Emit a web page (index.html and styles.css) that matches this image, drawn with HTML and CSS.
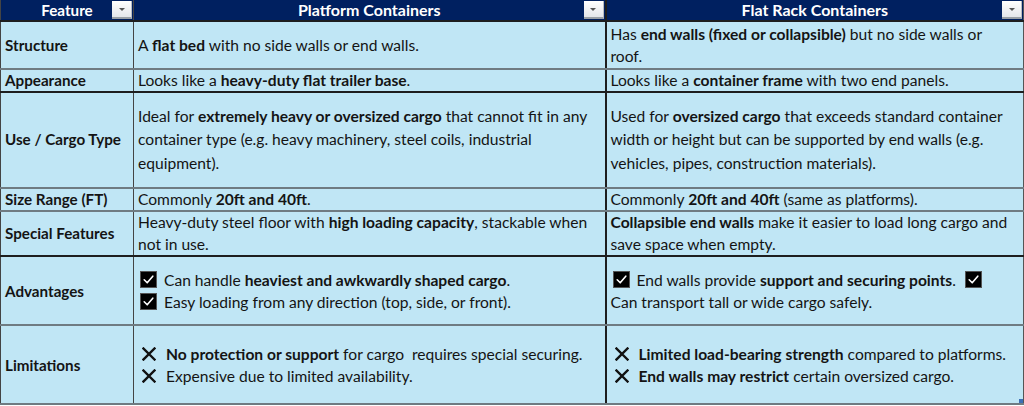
FILE: index.html
```html
<!DOCTYPE html>
<html lang="en">
<head>
<meta charset="utf-8">
<title>Platform vs Flat Rack Containers</title>
<link rel="stylesheet" href="styles.css">
</head>
<body>
<svg width="0" height="0" class="defs" aria-hidden="true">
  <defs>
    <symbol id="chk" viewBox="0 0 17 17">
      <rect x="0.5" y="0.5" width="16" height="16" fill="#000" stroke="#555" stroke-width="1"/>
      <path d="M4.2 8.8 L7.2 11.8 L12.8 5.2" fill="none" stroke="#fff" stroke-width="1.6" stroke-linecap="round" stroke-linejoin="round"/>
    </symbol>
    <symbol id="xx" viewBox="0 0 14 14">
      <path d="M1.5 1.5 L12.5 12.5 M12.5 1.5 L1.5 12.5" fill="none" stroke="#111" stroke-width="2.4" stroke-linecap="square"/>
    </symbol>
  </defs>
</svg>
<table class="grid">
  <colgroup>
    <col class="c1">
    <col class="c2">
    <col class="c3">
  </colgroup>
  <thead>
    <tr class="head">
      <th class="col-a">Feature<span class="filter"><i></i></span></th>
      <th class="col-b">Platform Containers<span class="filter"><i></i></span></th>
      <th class="col-c">Flat Rack Containers<span class="filter"><i></i></span></th>
    </tr>
  </thead>
  <tbody>
    <tr class="r-structure">
      <th class="col-a">Structure</th>
      <td class="col-b">A <b>flat bed</b> with no side walls or end walls.</td>
      <td class="col-c">Has <b>end walls (fixed or collapsible)</b> but no side walls or<br>roof.</td>
    </tr>
    <tr class="r-appearance dark">
      <th class="col-a">Appearance</th>
      <td class="col-b">Looks like a <b>heavy-duty flat trailer base</b>.</td>
      <td class="col-c">Looks like a <b>container frame</b> with two end panels.</td>
    </tr>
    <tr class="r-use">
      <th class="col-a">Use / Cargo Type</th>
      <td class="col-b">Ideal for <b>extremely heavy or oversized cargo</b> that cannot fit in any<br>container type (e.g. heavy machinery, steel coils, industrial<br>equipment).</td>
      <td class="col-c">Used for <b>oversized cargo</b> that exceeds standard container<br>width or height but can be supported by end walls (e.g.<br>vehicles, pipes, construction materials).</td>
    </tr>
    <tr class="r-size">
      <th class="col-a">Size Range (FT)</th>
      <td class="col-b">Commonly <b>20ft and 40ft</b>.</td>
      <td class="col-c">Commonly <b>20ft and 40ft</b> (same as platforms).</td>
    </tr>
    <tr class="r-special dark">
      <th class="col-a">Special Features</th>
      <td class="col-b">Heavy-duty steel floor with <b>high loading capacity</b>, stackable when<br>not in use.</td>
      <td class="col-c"><b>Collapsible end walls</b> make it easier to load long cargo and<br>save space when empty.</td>
    </tr>
    <tr class="r-adv">
      <th class="col-a">Advantages</th>
      <td class="col-b">
        <div class="item"><svg class="ico-chk"><use href="#chk"/></svg><span>Can handle <b>heaviest and awkwardly shaped cargo</b>.</span></div>
        <div class="item"><svg class="ico-chk"><use href="#chk"/></svg><span>Easy loading from any direction (top, side, or front).</span></div>
      </td>
      <td class="col-c">
        <div class="item"><svg class="ico-chk"><use href="#chk"/></svg><span>End walls provide <b>support and securing points</b>.</span><svg class="ico-chk tail"><use href="#chk"/></svg></div>
        <div class="item">Can transport tall or wide cargo safely.</div>
      </td>
    </tr>
    <tr class="r-lim">
      <th class="col-a">Limitations</th>
      <td class="col-b">
        <div class="item"><svg class="ico-x"><use href="#xx"/></svg><span><b>No protection or support</b> for cargo&nbsp; requires special securing.</span></div>
        <div class="item"><svg class="ico-x"><use href="#xx"/></svg><span>Expensive due to limited availability.</span></div>
      </td>
      <td class="col-c">
        <div class="item"><svg class="ico-x"><use href="#xx"/></svg><span><b>Limited load-bearing strength</b> compared to platforms.</span></div>
        <div class="item"><svg class="ico-x"><use href="#xx"/></svg><span><b>End walls may restrict</b> certain oversized cargo.</span></div>
        <span class="resize"></span>
      </td>
    </tr>
  </tbody>
</table>
</body>
</html>
```

FILE: styles.css
```css
html, body {
  margin: 0;
  padding: 0;
  background: #ffffff;
}

.defs {
  position: absolute;
  width: 0;
  height: 0;
  overflow: hidden;
}

.grid {
  width: 1023px;
  border-collapse: collapse;
  table-layout: fixed;
  font-family: "Lato", "Liberation Sans", sans-serif;
  font-size: 15.6px;
  line-height: 22px;
  color: #141414;
  background: #c0e6f5;
}

.c1 { width: 133px; }
.c2 { width: 472px; }
.c3 { width: 418px; }

.grid th,
.grid td {
  padding: 0 4px;
  vertical-align: middle;
  text-align: left;
  border-bottom: 2px solid #6f7b82;
  position: relative;
}

.grid tr.dark th,
.grid tr.dark td,
.grid tr.head th {
  border-bottom-color: #1e1e1e;
}

.grid .col-a {
  border-left: 1px solid #444;
  border-right: 1px solid #444;
  font-weight: 700;
  font-size: 15.2px;
  white-space: nowrap;
}

.grid .col-c {
  border-left: 2px solid #1e1e1e;
  border-right: 1px solid #555;
}

.grid b {
  font-weight: 700;
}

/* header */
.head th {
  background: #002060;
  color: #ffffff;
  font-weight: 700;
  font-size: 16px;
  text-align: center;
  height: 20px;
  padding: 0;
  line-height: 20px;
}

.filter {
  position: absolute;
  right: 1px;
  top: 1px;
  width: 20px;
  height: 18px;
  background: linear-gradient(#ffffff, #e4e6ea);
  border-bottom: 2px solid #9aa0a6;
  border-right: 1px solid #b8bcc0;
  box-sizing: border-box;
  display: flex;
  align-items: center;
  justify-content: center;
}

.filter i {
  display: block;
  width: 0;
  height: 0;
  border-left: 3px solid transparent;
  border-right: 3px solid transparent;
  border-top: 3px solid #555;
}

/* row heights */
.r-structure th, .r-structure td { height: 46px; }
.r-appearance th, .r-appearance td { height: 21px; line-height: 21px; }
.r-use th, .r-use td { height: 94px; line-height: 23.5px; }
.r-size th, .r-size td { height: 21px; line-height: 21px; }
.r-special th, .r-special td { height: 43px; line-height: 21.5px; }
.r-adv th, .r-adv td { height: 67px; }
.r-lim th, .r-lim td { height: 77px; }

/* list items with icons */
.item {
  display: flex;
  align-items: center;
  gap: 7px;
  height: 22px;
}

.ico-chk {
  width: 17px;
  height: 17px;
  flex: none;
  margin-left: 2px;
}

.ico-chk.tail {
  margin-left: 2px;
}

.ico-x {
  width: 14px;
  height: 14px;
  flex: none;
  margin-left: 4px;
  margin-right: 3px;
}

.resize {
  position: absolute;
  right: 0;
  bottom: 0;
  width: 4px;
  height: 4px;
  background: #3d6fb6;
}
```
